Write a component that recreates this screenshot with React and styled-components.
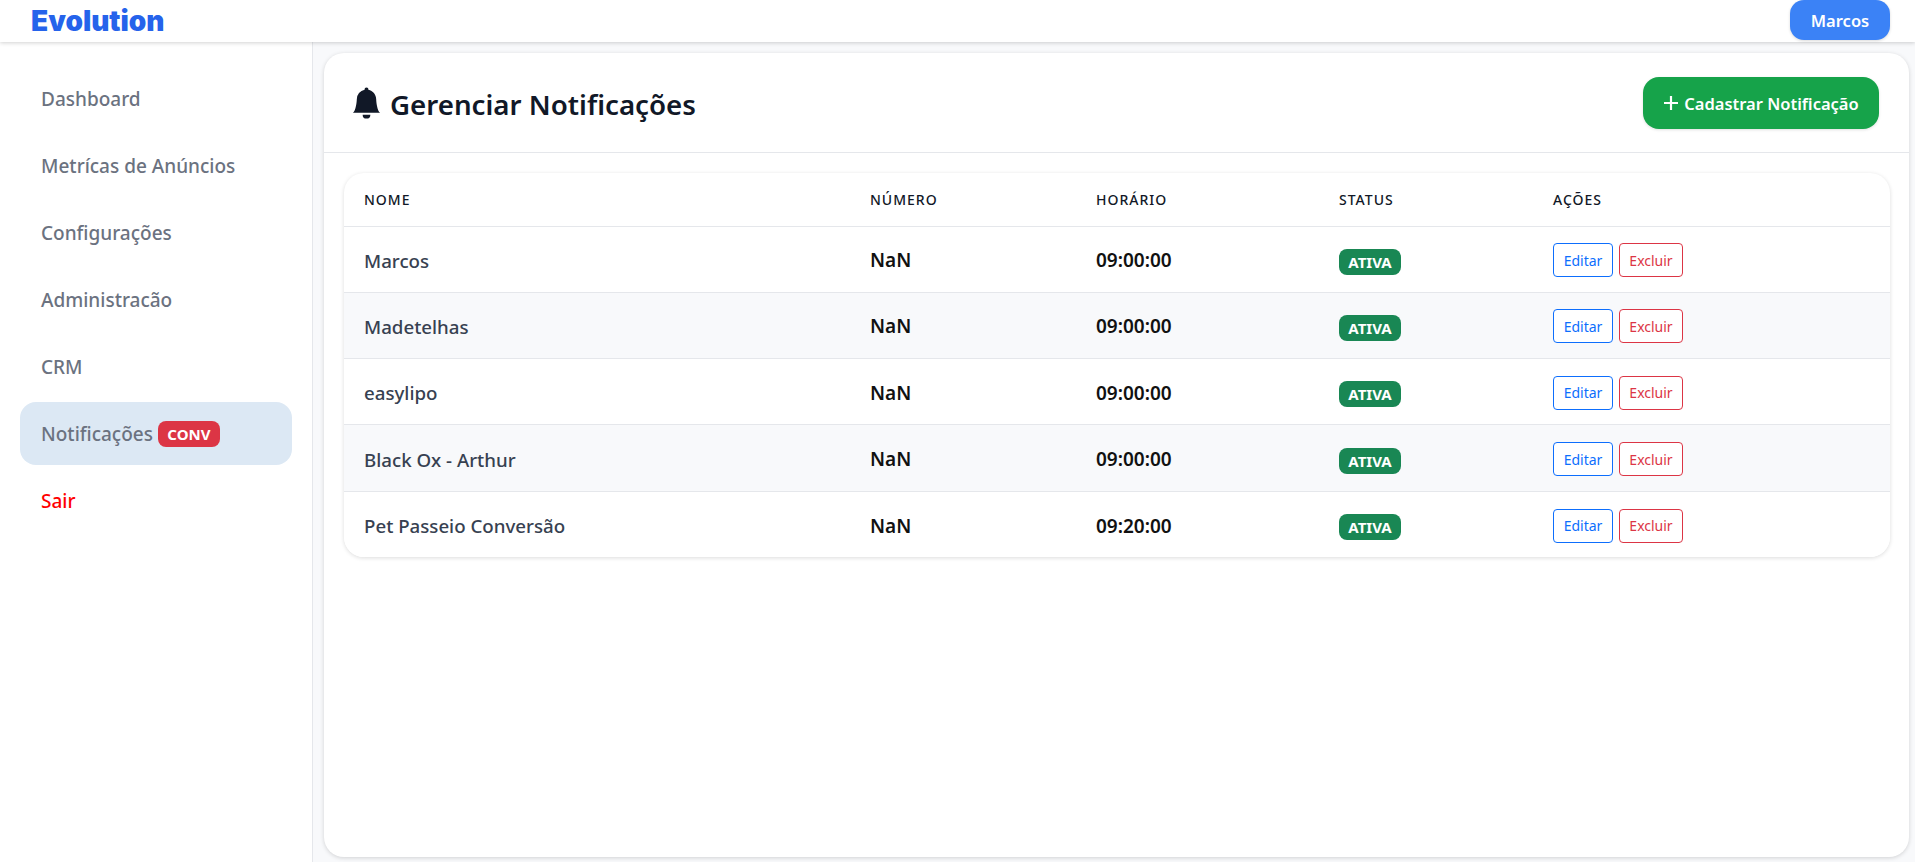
import React from "react";
import styled, { createGlobalStyle } from "styled-components";
import { BsBellFill } from "react-icons/bs";

const Global = createGlobalStyle`
  html, body { margin: 0; padding: 0; height: 100%; background: #fff; }
  body { font-family: "Noto Sans", "Open Sans", sans-serif; overflow: hidden; }
  * { box-sizing: border-box; }
`;

const Page = styled.div`
  width: 1915px;
  height: 862px;
  display: flex;
  flex-direction: column;
`;

const Navbar = styled.header`
  height: 42px;
  flex: none;
  display: flex;
  align-items: flex-start;
  justify-content: space-between;
  padding: 0 25px 0 31px;
  background: #fff;
  box-shadow: 0 1px 4px rgba(0, 0, 0, 0.18);
  position: relative;
  z-index: 2;
`;

const Logo = styled.div`
  font-family: "Inter", sans-serif;
  font-weight: 900;
  font-size: 28px;
  line-height: 43px;
  color: #2563eb;
`;

const UserButton = styled.button`
  width: 100px;
  height: 40px;
  border: 0;
  border-radius: 14px;
  background: #3b82f6;
  color: #fff;
  font: 600 16.5px "Noto Sans", sans-serif;
  box-shadow: 0 1px 3px rgba(0, 0, 0, 0.15);
`;

const Body = styled.div`
  flex: 1;
  min-height: 0;
  display: flex;
`;

const Sidebar = styled.nav`
  width: 313px;
  flex: none;
  padding: 25px 20px 0;
  background: #fff;
  border-right: 1px solid #e5e7eb;
  box-shadow: 1px 0 3px rgba(0, 0, 0, 0.05);
  display: flex;
  flex-direction: column;
  gap: 4px;
`;

const NavItem = styled.a`
  height: 63px;
  display: flex;
  align-items: center;
  gap: 5px;
  padding-left: 21px;
  border-radius: 16px;
  font-size: 19px;
  font-weight: 500;
  color: ${(p) => (p.$danger ? "#ff0000" : "#6b7280")};
  background: ${(p) => (p.$active ? "#dce8f4" : "transparent")};
`;

const NavBadge = styled.span`
  width: 62px;
  height: 26px;
  display: inline-flex;
  align-items: center;
  justify-content: center;
  border-radius: 8px;
  background: #dc3545;
  color: #fff;
  font-size: 15px;
  font-weight: 700;
`;

const Main = styled.main`
  flex: 1;
  min-width: 0;
  padding: 11px 6px 5px 11px;
  background: #f8f9fb;
`;

const Card = styled.section`
  height: 100%;
  background: #fff;
  border-radius: 20px;
  box-shadow: 0 1px 4px rgba(0, 0, 0, 0.16);
  overflow: hidden;
`;

const CardHeader = styled.div`
  height: 100px;
  display: flex;
  align-items: center;
  justify-content: space-between;
  padding: 1px 30px 0 27px;
  border-bottom: 1px solid #e5e7eb;
`;

const Title = styled.h1`
  margin: 0;
  padding-top: 2px;
  display: flex;
  align-items: center;
  gap: 8px;
  font-size: 27.7px;
  font-weight: 600;
  color: #111827;
  svg { width: 31px; height: 32px; margin-top: -2px; }
`;

const AddButton = styled.button`
  width: 236px;
  height: 52px;
  display: flex;
  align-items: center;
  justify-content: center;
  gap: 5px;
  border: 0;
  border-radius: 16px;
  background: #16a34a;
  color: #fff;
  font: 600 16.5px "Noto Sans", sans-serif;
  box-shadow: 0 1px 3px rgba(0, 0, 0, 0.12);
  svg { width: 16px; height: 16px; }
`;

const TableWrap = styled.div`
  margin: 20px 19px 0 20px;
  border-radius: 20px;
  box-shadow: 0 1px 4px rgba(0, 0, 0, 0.14);
  overflow: hidden;
`;

const Table = styled.table`
  width: 100%;
  border-collapse: collapse;
  table-layout: fixed;
`;

const Th = styled.th`
  width: ${(p) => p.$w}px;
  height: 53px;
  padding: 1px 0 0 20px;
  text-align: left;
  font-size: 14px;
  font-weight: 500;
  letter-spacing: 1px;
  text-transform: uppercase;
  color: #111827;
`;

const Tr = styled.tr`
  height: 66.3px;
  border-top: 1px solid #e5e7eb;
  background: ${(p) => (p.$alt ? "#f8f9fb" : "#fff")};
`;

const Td = styled.td`
  padding: 2px 0 0 20px;
  font-size: ${(p) => (p.$strong ? 19 : 18.7)}px;
  font-weight: ${(p) => (p.$strong ? 600 : 500)};
  color: ${(p) => (p.$strong ? "#111" : "#374151")};
`;

const StatusBadge = styled.span`
  width: 62px;
  height: 26px;
  margin-top: 3px;
  display: inline-flex;
  align-items: center;
  justify-content: center;
  vertical-align: middle;
  border-radius: 8px;
  background: #198754;
  color: #fff;
  font-size: 15px;
  font-weight: 700;
`;

const Actions = styled.div`
  display: flex;
  gap: 6px;
`;

const ActionButton = styled.button`
  height: 34px;
  width: ${(p) => p.$w}px;
  padding: 0;
  background: #fff;
  border: 1px solid ${(p) => p.$color};
  border-radius: 4px;
  color: ${(p) => p.$color};
  font: 400 14px "Noto Sans", sans-serif;
`;

const navItems = ["Dashboard", "Metrícas de Anúncios", "Configurações", "Administracão", "CRM"];

const rows = [
  ["Marcos", "09:00:00"],
  ["Madetelhas", "09:00:00"],
  ["easylipo", "09:00:00"],
  ["Black Ox - Arthur", "09:00:00"],
  ["Pet Passeio Conversão", "09:20:00"],
];

export default function App() {
  return (
    <Page>
      <Global />
      <Navbar>
        <Logo>Evolution</Logo>
        <UserButton>Marcos</UserButton>
      </Navbar>
      <Body>
        <Sidebar>
          {navItems.map((n) => (
            <NavItem key={n}>{n}</NavItem>
          ))}
          <NavItem $active>
            Notificações <NavBadge>CONV</NavBadge>
          </NavItem>
          <NavItem $danger>Sair</NavItem>
        </Sidebar>
        <Main>
          <Card>
            <CardHeader>
              <Title>
                <BsBellFill />
                Gerenciar Notificações
              </Title>
              <AddButton>
                <svg viewBox="0 0 16 16" fill="none" stroke="currentColor" strokeWidth="2.2">
                  <path d="M8 1v14M1 8h14" />
                </svg>
                Cadastrar Notificação
              </AddButton>
            </CardHeader>
            <TableWrap>
              <Table>
                <thead>
                  <tr>
                    <Th $w={506}>Nome</Th>
                    <Th $w={226}>Número</Th>
                    <Th $w={243}>Horário</Th>
                    <Th $w={214}>Status</Th>
                    <Th>Ações</Th>
                  </tr>
                </thead>
                <tbody>
                  {rows.map(([name, time], i) => (
                    <Tr key={name} $alt={i % 2 === 1}>
                      <Td>{name}</Td>
                      <Td $strong>NaN</Td>
                      <Td $strong>{time}</Td>
                      <Td>
                        <StatusBadge>ATIVA</StatusBadge>
                      </Td>
                      <Td>
                        <Actions>
                          <ActionButton $w={60} $color="#0d6efd">Editar</ActionButton>
                          <ActionButton $w={64} $color="#dc3545">Excluir</ActionButton>
                        </Actions>
                      </Td>
                    </Tr>
                  ))}
                </tbody>
              </Table>
            </TableWrap>
          </Card>
        </Main>
      </Body>
    </Page>
  );
}
